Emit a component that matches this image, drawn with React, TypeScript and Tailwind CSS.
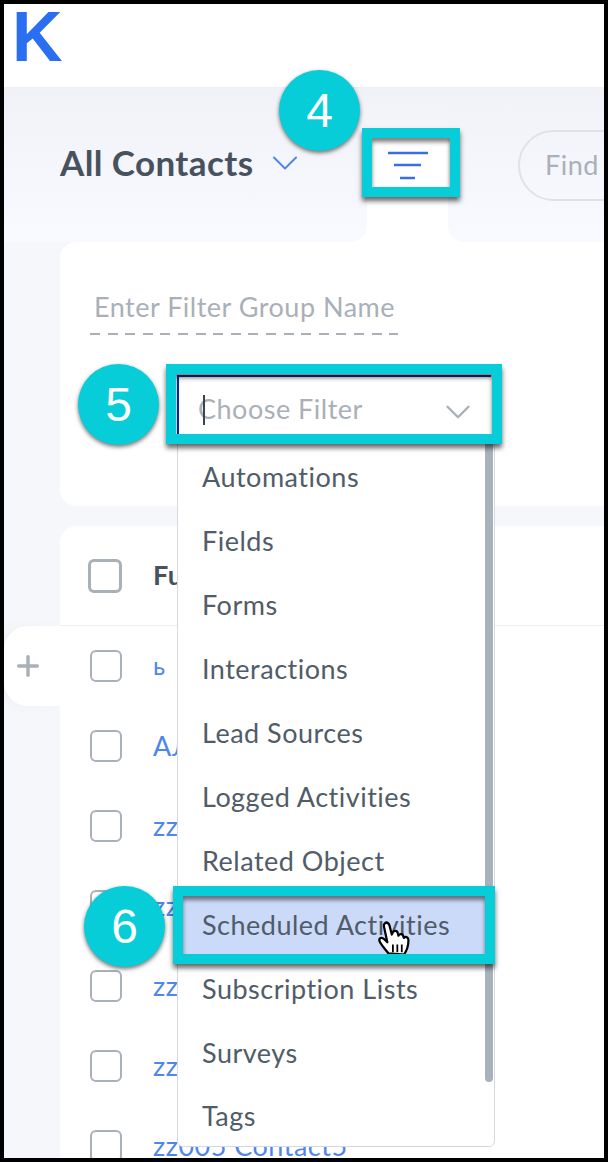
import { ChevronDown, Plus } from 'lucide-react'

const filters = [
  'Automations',
  'Fields',
  'Forms',
  'Interactions',
  'Lead Sources',
  'Logged Activities',
  'Related Object',
  'Scheduled Activities',
  'Subscription Lists',
  'Surveys',
  'Tags',
]

const contacts = ['ь', 'Алексей', 'zz001 Contact1', 'zz002 Contact2', 'zz003 Contact3', 'zz004 Contact4', 'zz005 Contact5']

function Badge({ n, className }: { n: number; className: string }) {
  return (
    <div
      className={`absolute z-30 w-[81px] h-[81px] rounded-full bg-[#07cdd9] shadow-[0_2px_4px_rgba(0,0,0,0.55)] flex items-center justify-center text-white text-[48px] tracking-normal font-['Liberation_Sans',sans-serif] ${className}`}
    >
      {n}
    </div>
  )
}

function Callout({ className }: { className: string }) {
  return (
    <div
      className={`absolute z-20 pointer-events-none border-[10px] border-[#07cdd9] shadow-[0_4px_5px_rgba(0,0,0,0.6),inset_0_4px_4px_rgba(0,0,0,0.5)] ${className}`}
    />
  )
}

function HandCursor() {
  return (
    <svg className="absolute left-[198px] top-[24px] z-10" width="36" height="40" viewBox="0 0 32 36">
      <path
        d="M11 31 C8 27 4 23 3 20 C2 17 5 16 7 18 L10 21 L7 7 C6 3 11 2 12 6 L14 14 L15 12 C16 10 19 10 19.5 13 L20 15 C21 13 24 13 24.5 16 L25 17 C26 15.5 29 16 29 19 C29 24 28 28 25 32 Z"
        fill="#fff"
        stroke="#000"
        strokeWidth="2"
        strokeLinejoin="round"
      />
      <path d="M15 23V30M19 23V30M23 23V30" stroke="#000" strokeWidth="1.6" />
    </svg>
  )
}

export default function App() {
  return (
    <div className="relative w-[608px] h-[1162px] overflow-hidden bg-black p-1 font-['Lato',sans-serif] tracking-[0.5px]">
      <div className="relative h-full flex flex-col overflow-hidden bg-[#f6f7fb]">
        <header className="h-[84px] shrink-0 bg-white border-b border-[#eceef2] flex items-start pl-[8px]">
          <span className="text-[70px] leading-[66px] font-bold tracking-normal text-[#2a6ff0] font-['Liberation_Sans',sans-serif]">K</span>
        </header>

        <div className="h-[154px] shrink-0 flex bg-white">
          <div className="w-[363px] shrink-0 rounded-br-2xl bg-gradient-to-b from-[#f1f2f7] to-[#f9faff] pl-[56px] pt-[51px] flex items-start">
            <h1 className="text-[35px] leading-[46px] font-bold tracking-[0.4px] text-[#47525e] whitespace-nowrap">All Contacts</h1>
            <ChevronDown size={44} strokeWidth={1.1} className="ml-[10px] mt-[2px] text-[#4f86ec]" />
          </div>
          <div className="w-[81px] shrink-0 relative bg-[linear-gradient(#f1f2f7,#f4f5f9_44px,#fff_44px)]">
            <svg width="44" height="30" viewBox="0 0 44 30" className="absolute left-[19px] top-[63px]">
              <path d="M2 2H42M8 14H35M14 27H29" stroke="#3b6fe0" strokeWidth="2.4" />
            </svg>
          </div>
          <div className="flex-1 min-w-0 overflow-hidden rounded-bl-2xl bg-gradient-to-b from-[#f1f2f7] to-[#f9faff] pl-[70px] pt-[42px]">
            <div className="h-[71px] w-[200px] rounded-full border-2 border-[#dfe2e6] pl-[25px] flex items-center text-[27px] text-[#a9b0b8] whitespace-nowrap">
              Find
            </div>
          </div>
        </div>

        <div className="flex-1 flex min-h-0">
          <aside className="w-[56px] shrink-0 pt-[384px]">
            <div className="h-[80px] bg-white rounded-l-3xl flex items-center justify-center pr-[8px] shadow-[-6px_0_12px_rgba(90,100,130,0.04)]">
              <Plus size={32} strokeWidth={2.6} className="text-[#a8b0b8]" />
            </div>
          </aside>

          <main className="flex-1 min-w-0 flex flex-col gap-5">
            <section className="h-[264px] shrink-0 bg-white rounded-tl-2xl rounded-bl-2xl pl-[30px] pt-[46px]">
              <div className="text-[27px] leading-[38px] pl-[4px] text-[#a9b0b8] whitespace-nowrap">Enter Filter Group Name</div>
              <div className="mt-[7px] w-[308px] h-[2px] bg-[repeating-linear-gradient(90deg,#a9b0b8_0_10px,transparent_10px_17.6px)]" />

              <div className="relative z-20 ml-[87px] mt-[40px] w-[314px] h-[60px] border-t-2 border-l-2 border-[#0b2f9f] flex items-center pl-[19px] pr-[12px] pt-[6px] bg-white">
                <span className="absolute left-[24px] top-[18px] w-[2px] h-[30px] bg-[#3a4450]" />
                <span className="flex-1 text-[27px] text-[#a9b0b8]">Choose Filter</span>
                <ChevronDown size={42} strokeWidth={1.4} className="mt-[6px] text-[#a9b0b8]" />
                <Callout className="-left-[13px] -top-[13px] w-[336px] h-[80px]" />

                <div className="absolute left-[-2px] top-[58px] w-[318px] bg-white border border-[#d5d8de] rounded-b-md pt-[11px] z-[-1]">
                  {filters.map((name) => (
                    <div
                      key={name}
                      className={
                        name === 'Tags'
                          ? 'relative h-[59px] pb-[1px] pl-[24px] flex items-center text-[27px] text-[#505c68]'
                          : name === 'Scheduled Activities'
                            ? 'relative h-16 pb-[4px] pl-[24px] flex items-center text-[27px] text-[#505c68] bg-[#ccdafa]'
                            : 'relative h-16 pb-[4px] pl-[24px] flex items-center text-[27px] text-[#505c68]'
                      }
                    >
                      {name}
                      {name === 'Scheduled Activities' && (
                        <>
                          <HandCursor />
                          <Callout className="-left-[5px] -top-[9px] w-[322px] h-[78px]" />
                          <Badge n={6} className="-left-[94px] -top-[9px]" />
                        </>
                      )}
                    </div>
                  ))}
                  <div className="absolute right-[1px] top-0 w-[8px] h-[646px] rounded-b-full bg-[#a8b2bc]" />
                </div>
              </div>
            </section>

            <section className="flex-1 min-h-0 bg-white rounded-tl-2xl">
              <div className="h-[100px] border-b border-[#eceef2] flex items-center pl-[28px] gap-[31px]">
                <span className="w-[34px] h-[34px] rounded-md border-[3px] border-[#a8b0b8]" />
                <span className="text-[27px] font-bold text-[#47525e]">Full Name</span>
              </div>
              {contacts.map((name, i) => (
                <div key={name} className="h-20 flex items-center pl-[30px] gap-[31px]">
                  <span className="w-[32px] h-[32px] rounded-md border-2 border-[#a8b0b8] shrink-0" />
                  <span className={i === 0 ? 'text-[25px] text-[#4f86ec]' : 'text-[27px] text-[#4f86ec]'}>{name}</span>
                </div>
              ))}
            </section>
          </main>
        </div>

        <Callout className="left-[358px] top-[124px] w-[98px] h-[69px]" />
        <Badge n={4} className="left-[275px] top-[66px]" />
        <Badge n={5} className="left-[74px] top-[360px]" />
      </div>
    </div>
  )
}
